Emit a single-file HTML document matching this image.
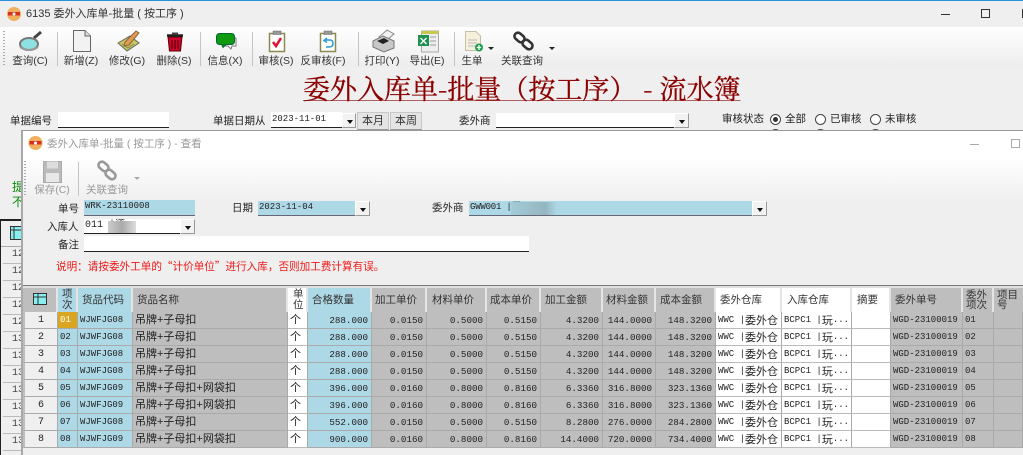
<!DOCTYPE html>
<html lang="zh"><head><meta charset="utf-8"><title>委外入库单-批量</title>
<style>
html,body{margin:0;padding:0;width:1023px;height:455px;overflow:hidden;background:#efefef}
body{position:relative;font-family:"Liberation Sans","Noto Sans CJK SC",sans-serif;color:#222}
.a{position:absolute}
.t{position:absolute;white-space:nowrap;font-size:10.5px;line-height:14px;color:#222}
.c{transform:translateX(-50%);font-size:10.5px;color:#333}
.inp{position:absolute;box-sizing:border-box;background:#fff;border-bottom:1px solid #222;white-space:nowrap;overflow:hidden;font:9px/13px "Liberation Mono","Noto Sans CJK SC",monospace;padding-left:1px}
.blue{background:#add8e6;border-bottom:1px solid #667}
.btn{position:absolute;box-sizing:border-box;background:#f2f2f2;border-right:1px solid #999;border-bottom:1px solid #999;border-top:1px solid #fff;border-left:1px solid #fff}
.btn:after{content:"";position:absolute;left:4px;top:6px;border:3px solid transparent;border-top:4px solid #111;border-bottom:0}
.tb{position:absolute;box-sizing:border-box;background:#e4e4e4;border:1px solid #c8c8c8;border-bottom:1px solid #999;font-size:11px;line-height:16px;text-align:center;color:#333}
.r{position:absolute;box-sizing:border-box;width:11px;height:11px;border:1px solid #444;border-radius:50%;background:#fff}
.r.on:after{content:"";position:absolute;left:2px;top:2px;width:5px;height:5px;border-radius:50%;background:#333}
.sep{position:absolute;width:1px;background:#c4c4c4}
.dots{position:absolute;width:2px;background:repeating-linear-gradient(#aaa 0 1px,transparent 1px 3px)}
.n{position:absolute;left:12px;font:10px/12px "Liberation Mono",monospace;color:#444}
.l{position:absolute;left:3px;width:18px;height:1px;background:#bbb}
table{position:absolute;left:23px;top:288px;border-collapse:separate;border-spacing:0;table-layout:fixed;width:1000px}
th{height:24px;padding:0 0 0 3px;box-sizing:border-box;font-weight:normal;font-size:10.5px;line-height:11px;text-align:left;background:#bebebe;border-right:2px solid #e4e4e4;color:#333;white-space:nowrap;overflow:hidden}
tr{height:17px}
td{height:17px;max-height:17px;padding:0 2px;box-sizing:border-box;background:#bebebe;border-bottom:1px solid #aaa;border-right:1px solid #aaa;font:9px/11px "Liberation Mono","Noto Sans CJK SC",monospace;color:#222;white-space:nowrap;overflow:hidden}
th:nth-child(2),th:nth-child(3),th:nth-child(6),td:nth-child(2),td:nth-child(3),td:nth-child(6){background:#add8e6}
th:nth-child(5),th:nth-child(14),th:nth-child(15),th:nth-child(16),td:nth-child(5),td:nth-child(14),td:nth-child(15),td:nth-child(16){background:#fff;border-bottom-color:#bbb}
td:nth-child(1){background:#efefef;text-align:center;font-size:10px;border-left:2px solid #bebebe}
td:nth-child(4),td:nth-child(5){font-size:11px;line-height:11px;font-family:"Liberation Sans","Noto Sans CJK SC",sans-serif}
td:nth-child(6),td:nth-child(7),td:nth-child(8),td:nth-child(9),td:nth-child(10),td:nth-child(11),td:nth-child(12){text-align:right;font-size:9.2px;padding-right:3px}
td b{font:11px/11px "Noto Sans CJK SC",sans-serif;vertical-align:top}
td.o{background:#daa520!important;color:#fff}
</style></head><body>

<!-- main window -->
<div class="a" style="left:0;top:0;width:1023px;height:1px;background:#2b90d9"></div>
<div class="a" style="left:0;top:27px;width:1023px;height:40px;background:linear-gradient(#fff,#ededed)"></div>
<div class="t" style="left:26px;top:7px;font-size:11px;color:#333">6135 委外入库单-批量 ( 按工序 )</div>
<div class="a" style="left:941px;top:14px;width:9px;height:1px;background:#333"></div>
<div class="a" style="left:981px;top:9px;width:9px;height:9px;box-sizing:border-box;border:1px solid #333"></div>
<div class="a" style="left:1022px;top:9px;width:1px;height:9px;background:#333"></div>

<div class="dots" style="left:3px;top:31px;height:34px"></div>
<div class="sep" style="left:57px;top:32px;height:34px"></div>
<div class="sep" style="left:200px;top:32px;height:34px"></div>
<div class="sep" style="left:252px;top:32px;height:34px"></div>
<div class="sep" style="left:358px;top:32px;height:34px"></div>
<div class="sep" style="left:454px;top:32px;height:34px"></div>

<div class="t c" style="left:30px;top:54px">查询(C)</div>
<div class="t c" style="left:81px;top:54px">新增(Z)</div>
<div class="t c" style="left:127px;top:54px">修改(G)</div>
<div class="t c" style="left:174px;top:54px">删除(S)</div>
<div class="t c" style="left:225px;top:54px">信息(X)</div>
<div class="t c" style="left:276px;top:54px">审核(S)</div>
<div class="t c" style="left:323px;top:54px">反审核(F)</div>
<div class="t c" style="left:382px;top:54px">打印(Y)</div>
<div class="t c" style="left:427px;top:54px">导出(E)</div>
<div class="t c" style="left:472px;top:54px">生单</div>
<div class="t c" style="left:522px;top:54px">关联查询</div>

<div class="a" style="left:303px;top:72px;white-space:nowrap;font:27px/32px 'Noto Serif CJK SC','Liberation Serif',serif;color:#8b0000;-webkit-text-stroke:.3px #8b0000;text-decoration:underline;text-decoration-color:#b06060;text-decoration-thickness:1px;text-underline-offset:1px">委外入库单-批量（按工序） - 流水簿</div>

<div class="t" style="left:10px;top:114px">单据编号</div>
<div class="inp" style="left:58px;top:112px;width:111px;height:16px"></div>
<div class="t" style="left:213px;top:114px">单据日期从</div>
<div class="inp" style="left:271px;top:112px;width:71px;height:16px;padding-top:1px">2023-11-01</div>
<div class="btn" style="left:342px;top:113px;width:14px;height:15px"></div>
<div class="tb" style="left:357px;top:112px;width:32px;height:18px">本月</div>
<div class="tb" style="left:390px;top:112px;width:32px;height:18px">本周</div>
<div class="t" style="left:459px;top:114px">委外商</div>
<div class="inp" style="left:496px;top:113px;width:178px;height:15px"></div>
<div class="btn" style="left:674px;top:113px;width:15px;height:15px"></div>
<div class="t" style="left:722px;top:112px">审核状态</div>
<div class="r on" style="left:770px;top:114px"></div><div class="t" style="left:785px;top:112px">全部</div>
<div class="r" style="left:815px;top:114px"></div><div class="t" style="left:830px;top:112px">已审核</div>
<div class="r" style="left:870px;top:114px"></div><div class="t" style="left:885px;top:112px">未审核</div>
<div class="r" style="left:770px;top:129px"></div><div class="r" style="left:815px;top:129px"></div><div class="r" style="left:870px;top:129px"></div>

<!-- behind window left -->
<div class="t" style="left:12px;top:180px;color:#0a8a0a;font-size:12px;line-height:15px">提<br>不</div>
<div class="a" style="left:0;top:219px;width:22px;height:236px;background:#efefef;border-top:2px solid #222;border-left:1px solid #222;box-sizing:border-box"></div>
<div class="a" style="left:1px;top:246px;width:20px;height:1px;background:#aaa"></div>
<div class="n" style="top:249px">12</div><div class="l" style="top:263px"></div>
<div class="n" style="top:266px">12</div><div class="l" style="top:280px"></div>
<div class="n" style="top:283px">12</div><div class="l" style="top:297px"></div>
<div class="n" style="top:300px">12</div><div class="l" style="top:314px"></div>
<div class="n" style="top:317px">12</div><div class="l" style="top:331px"></div>
<div class="n" style="top:334px">13</div><div class="l" style="top:348px"></div>
<div class="n" style="top:351px">13</div><div class="l" style="top:365px"></div>
<div class="n" style="top:368px">13</div><div class="l" style="top:382px"></div>
<div class="n" style="top:385px">13</div><div class="l" style="top:399px"></div>
<div class="n" style="top:402px">13</div><div class="l" style="top:416px"></div>
<div class="n" style="top:419px">13</div><div class="l" style="top:433px"></div>
<div class="n" style="top:436px">13</div><div class="l" style="top:450px"></div>
<svg class="a" style="left:10px;top:226px" width="11" height="14"><rect x=".5" y=".5" width="11" height="13" fill="#8ee" stroke="#333"/><path d="M0 4H11M4 0V14" stroke="#333"/></svg>

<!-- inner window -->
<div class="a" style="left:21px;top:130px;width:1002px;height:325px;box-sizing:border-box;background:#efefef;border-top:1px solid #999;border-left:2px solid #a8a8a8"></div>
<div class="a" style="left:23px;top:131px;width:1000px;height:26px;background:#fff"></div>
<div class="a" style="left:23px;top:157px;width:1000px;height:44px;background:linear-gradient(#fff,#efefef)"></div>
<div class="t" style="left:47px;top:137px;font-size:10.5px;color:#999">委外入库单-批量 ( 按工序 ) - 查看</div>
<div class="a" style="left:970px;top:144px;width:9px;height:1px;background:#aaa"></div>
<div class="a" style="left:1011px;top:139px;width:9px;height:9px;box-sizing:border-box;border:1px solid #aaa"></div>
<div class="dots" style="left:24px;top:161px;height:34px"></div>
<div class="sep" style="left:78px;top:162px;height:34px"></div>
<div class="t c" style="left:52px;top:183px;color:#999;font-size:10.5px">保存(C)</div>
<div class="t c" style="left:107px;top:183px;color:#999;font-size:10.5px">关联查询</div>

<div class="t" style="left:58px;top:202px">单号</div>
<div class="inp blue" style="left:84px;top:200px;width:111px;height:16px">WRK-23110008</div>
<div class="t" style="left:232px;top:201px">日期</div>
<div class="inp blue" style="left:258px;top:201px;width:97px;height:15px">2023-11-04</div>
<div class="btn" style="left:355px;top:201px;width:15px;height:15px"></div>
<div class="t" style="left:432px;top:201px">委外商</div>
<div class="inp blue" style="left:469px;top:201px;width:283px;height:15px;letter-spacing:-.2px">GWW001 |厂</div>
<div class="a" style="left:511px;top:202px;width:46px;height:13px;background:linear-gradient(90deg,#a3cbd8,#94b6c0 75%,#add8e6)"></div>
<div class="btn" style="left:752px;top:201px;width:15px;height:15px"></div>
<div class="t" style="left:47px;top:220px">入库人</div>
<div class="inp" style="left:84px;top:219px;width:96px;height:15px;font-size:10px">011 |道</div>
<div class="a" style="left:108px;top:221px;width:28px;height:12px;background:linear-gradient(90deg,#ccc,#aaa 50%,#ddd)"></div>
<div class="btn" style="left:180px;top:219px;width:15px;height:15px"></div>
<div class="t" style="left:58px;top:238px">备注</div>
<div class="inp" style="left:84px;top:236px;width:445px;height:16px"></div>
<div class="t" style="left:56px;top:260px;color:#f01818;font:10.6px/14px 'Noto Sans CJK SC',sans-serif">说明：请按委外工单的“计价单位”进行入库，否则加工费计算有误。</div>

<!-- grid -->
<div class="a" style="left:23px;top:285px;width:1000px;height:1px;background:#777"></div>
<div class="a" style="left:23px;top:286px;width:1000px;height:2px;background:#e0e0e0"></div>
<table>
<colgroup><col style="width:35px"><col style="width:20px"><col style="width:55px"><col style="width:155px"><col style="width:20px"><col style="width:64px"><col style="width:55px"><col style="width:60px"><col style="width:54px"><col style="width:62px"><col style="width:53px"><col style="width:60px"><col style="width:0"><col style="width:66px"><col style="width:70px"><col style="width:39px"><col style="width:72px"><col style="width:31px"><col style="width:29px"></colgroup>
<tr style="height:24px"><th></th><th style="padding-left:4px">项<br>次</th><th style="padding-left:4px">货品代码</th><th style="padding-left:4px">货品名称</th><th style="padding-left:5px">单<br>位</th><th style="padding-left:4px">合格数量</th><th style="padding-left:3px">加工单价</th><th style="padding-left:5px">材料单价</th><th style="padding-left:3px">成本单价</th><th style="padding-left:4px">加工金额</th><th style="padding-left:3px">材料金额</th><th style="padding-left:4px">成本金额</th><th style="padding:0;border:0"></th><th style="padding-left:4px">委外仓库</th><th style="padding-left:5px">入库仓库</th><th style="padding-left:5px">摘要</th><th style="padding-left:4px">委外单号</th><th style="padding-left:3px;line-height:10px">委外<br>项次</th><th style="padding-left:3px;line-height:10px;border:0">项目<br>号</th></tr>
<tr><td>1</td><td class="o">01</td><td>WJWFJG08</td><td>吊牌+子母扣</td><td>个</td><td>288.000</td><td>0.0150</td><td>0.5000</td><td>0.5150</td><td>4.3200</td><td>144.0000</td><td>148.3200</td><td style="padding:0;border:0"></td><td>WWC |<b>委外仓</b></td><td>BCPC1 |<b>玩</b>...</td><td></td><td>WGD-23100019</td><td>01</td><td></td></tr>
<tr><td>2</td><td>02</td><td>WJWFJG08</td><td>吊牌+子母扣</td><td>个</td><td>288.000</td><td>0.0150</td><td>0.5000</td><td>0.5150</td><td>4.3200</td><td>144.0000</td><td>148.3200</td><td style="padding:0;border:0"></td><td>WWC |<b>委外仓</b></td><td>BCPC1 |<b>玩</b>...</td><td></td><td>WGD-23100019</td><td>02</td><td></td></tr>
<tr><td>3</td><td>03</td><td>WJWFJG08</td><td>吊牌+子母扣</td><td>个</td><td>288.000</td><td>0.0150</td><td>0.5000</td><td>0.5150</td><td>4.3200</td><td>144.0000</td><td>148.3200</td><td style="padding:0;border:0"></td><td>WWC |<b>委外仓</b></td><td>BCPC1 |<b>玩</b>...</td><td></td><td>WGD-23100019</td><td>03</td><td></td></tr>
<tr><td>4</td><td>04</td><td>WJWFJG08</td><td>吊牌+子母扣</td><td>个</td><td>288.000</td><td>0.0150</td><td>0.5000</td><td>0.5150</td><td>4.3200</td><td>144.0000</td><td>148.3200</td><td style="padding:0;border:0"></td><td>WWC |<b>委外仓</b></td><td>BCPC1 |<b>玩</b>...</td><td></td><td>WGD-23100019</td><td>04</td><td></td></tr>
<tr><td>5</td><td>05</td><td>WJWFJG09</td><td>吊牌+子母扣+网袋扣</td><td>个</td><td>396.000</td><td>0.0160</td><td>0.8000</td><td>0.8160</td><td>6.3360</td><td>316.8000</td><td>323.1360</td><td style="padding:0;border:0"></td><td>WWC |<b>委外仓</b></td><td>BCPC1 |<b>玩</b>...</td><td></td><td>WGD-23100019</td><td>05</td><td></td></tr>
<tr><td>6</td><td>06</td><td>WJWFJG09</td><td>吊牌+子母扣+网袋扣</td><td>个</td><td>396.000</td><td>0.0160</td><td>0.8000</td><td>0.8160</td><td>6.3360</td><td>316.8000</td><td>323.1360</td><td style="padding:0;border:0"></td><td>WWC |<b>委外仓</b></td><td>BCPC1 |<b>玩</b>...</td><td></td><td>WGD-23100019</td><td>06</td><td></td></tr>
<tr><td>7</td><td>07</td><td>WJWFJG08</td><td>吊牌+子母扣</td><td>个</td><td>552.000</td><td>0.0150</td><td>0.5000</td><td>0.5150</td><td>8.2800</td><td>276.0000</td><td>284.2800</td><td style="padding:0;border:0"></td><td>WWC |<b>委外仓</b></td><td>BCPC1 |<b>玩</b>...</td><td></td><td>WGD-23100019</td><td>07</td><td></td></tr>
<tr><td>8</td><td>08</td><td>WJWFJG09</td><td>吊牌+子母扣+网袋扣</td><td>个</td><td>900.000</td><td>0.0160</td><td>0.8000</td><td>0.8160</td><td>14.4000</td><td>720.0000</td><td>734.4000</td><td style="padding:0;border:0"></td><td>WWC |<b>委外仓</b></td><td>BCPC1 |<b>玩</b>...</td><td></td><td>WGD-23100019</td><td>08</td><td></td></tr>
</table>

<!-- icons -->
<svg class="a" style="left:0;top:0" width="1023" height="455" viewBox="0 0 1023 455" fill="none">
<!-- logo -->
<circle cx="14" cy="14" r="7" fill="#f0b060"/><rect x="8" y="12" width="12" height="3.5" fill="#d83020"/><circle cx="14" cy="14" r="1.5" fill="#fff"/>
<circle cx="35.500" cy="143" r="7" fill="#f0b060"/><rect x="29.500" y="141" width="12" height="3.500" fill="#d83020"/><circle cx="35.500" cy="143" r="1.500" fill="#fff"/>
<!-- magnifier -->
<path d="M34 38L41 32" stroke="#444" stroke-width="3"/>
<ellipse cx="29" cy="44" rx="9" ry="6" fill="#8fe0e0" stroke="#777" stroke-width="2"/>
<path d="M20 47q9 6 18 0" stroke="#999" stroke-width="2"/>
<!-- doc -->
<path d="M73.500 30.500H85L90.500 36V51.500H73.500Z" fill="#f2f2f2" stroke="#666"/><path d="M85 30.500V36H90.500" fill="#ddd" stroke="#666"/>
<!-- edit -->
<path d="M118 43L130 36L139 43L127 51Z" fill="#c8c860" stroke="#666"/><path d="M122 44l6 4l6-4" stroke="#884"/>
<path d="M125 42L136 31L139 33L129 45L124 46Z" fill="#e09a50" stroke="#864"/>
<!-- trash -->
<path d="M168 37H182L180.500 51H169.500Z" fill="#d00030" stroke="#500"/><path d="M167 35.500H183" stroke="#222" stroke-width="2.500"/><rect x="172" y="32.500" width="6" height="2" fill="#444"/><path d="M172 40V49M175 40V49M178 40V49" stroke="#400"/>
<!-- chat -->
<path d="M222 38H236V46H232L231 49L228 46H222Z" fill="#fff" stroke="#777"/>
<rect x="216.500" y="33.500" width="18" height="11" rx="3" fill="#109a10" stroke="#063"/><path d="M222 44.500l1 3l3-3" fill="#109a10" stroke="#063"/>
<!-- audit -->
<rect x="269.500" y="33.500" width="15" height="18" fill="#fff" stroke="#8a8a50" stroke-width="1.500"/><rect x="273" y="31" width="8" height="3.500" fill="#999" stroke="#666" stroke-width=".5"/>
<path d="M273 42l3 4l5-8" stroke="#e01030" stroke-width="2.500"/>
<!-- unaudit -->
<rect x="320.500" y="33.500" width="15" height="18" fill="#fff" stroke="#8a8a50" stroke-width="1.500"/><rect x="324" y="31" width="8" height="3.500" fill="#999" stroke="#666" stroke-width=".5"/>
<path d="M325 40h5q3 0 3 3.500t-4 3.500h-3M327 38l-3 2.500l3 2" stroke="#2a9ad8" stroke-width="1.500"/>
<!-- print -->
<path d="M379 37L387 30L394 34L387 40Z" fill="#f0f0f0" stroke="#888"/>
<path d="M373 41L383 36L394 41V48L384 52L373 47Z" fill="#c8c8c8" stroke="#777"/><path d="M377 41L384 38L389 41L383 44Z" fill="#222"/>
<!-- excel -->
<rect x="421.500" y="31" width="17" height="21" fill="#eee" stroke="#aaa"/><rect x="421.500" y="31" width="17" height="3" fill="#c8c850"/><path d="M430 37h6M430 41h6M430 45h6" stroke="#999"/>
<rect x="418" y="35" width="11" height="11" fill="#209050"/><path d="M420.500 38l6 6M426.500 38l-6 6" stroke="#fff" stroke-width="1.300"/>
<!-- gen doc -->
<path d="M465.500 31.500H476L480.500 36V50.500H465.500Z" fill="#f5f0dc" stroke="#c4c0a8"/><path d="M468 40h9M468 43h9M468 46h7" stroke="#bbb"/>
<circle cx="479" cy="47.500" r="4" fill="#1e9e50"/><path d="M479 45v5M476.800 47.500h4.400" stroke="#fff" stroke-width="1.300"/>
<path d="M488 47h6l-3 3z" fill="#222"/><path d="M549 47h6l-3 3z" fill="#222"/>
<!-- chain -->
<g stroke="#333" stroke-width="2.600"><rect x="514" y="34" width="11" height="7" rx="3.500" transform="rotate(40 519.500 37.500)"/><rect x="522" y="41" width="11" height="7" rx="3.500" transform="rotate(40 527.500 44.500)"/></g>
<!-- save gray -->
<rect x="43.500" y="161.500" width="18" height="21" fill="#bbb" stroke="#aaa"/><rect x="47" y="161.500" width="11" height="7" fill="#ddd"/><rect x="46" y="173" width="13" height="9" fill="#e8e8e8"/>
<!-- chain gray -->
<g stroke="#999" stroke-width="2.600"><rect x="98" y="163" width="11" height="7" rx="3.500" transform="rotate(40 103.500 166.500)"/><rect x="105" y="171" width="11" height="7" rx="3.500" transform="rotate(40 110.500 174.500)"/></g>
<path d="M134 177h6l-3 3z" fill="#aaa"/>
<!-- grid corner -->
<rect x="33.500" y="293.500" width="13" height="11" fill="#8ee" stroke="#333"/><path d="M33 297H47M38 293V305" stroke="#333"/>
</svg>
</body></html>
